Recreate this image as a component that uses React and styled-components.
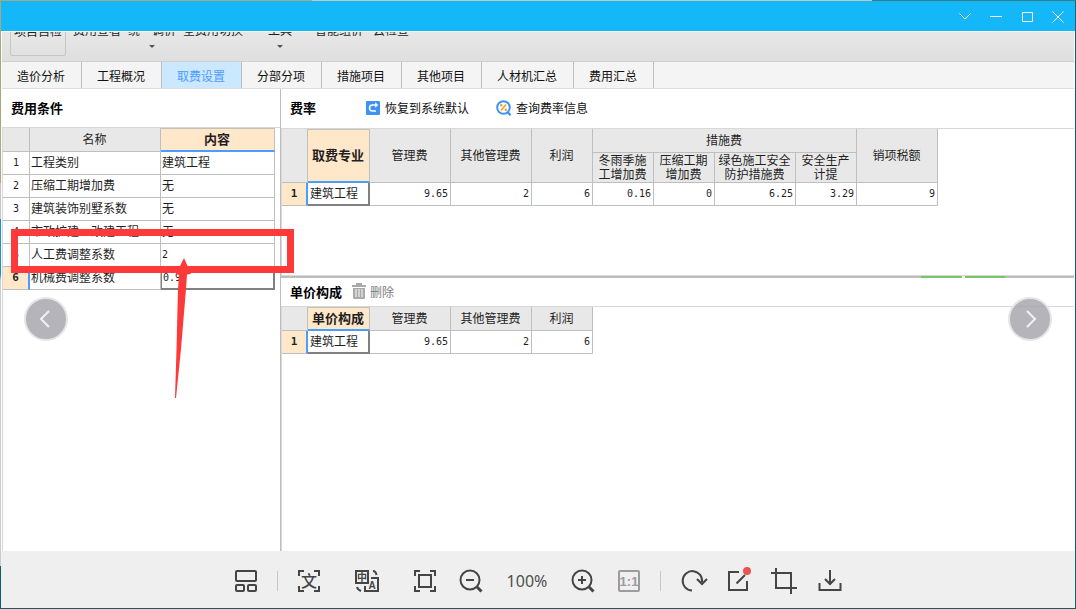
import React, { useState } from 'react';
import styled, { createGlobalStyle } from 'styled-components';

const GlobalStyle = createGlobalStyle`
  * {
    box-sizing: border-box;
  }

  body {
    margin: 0;
    font-family: "Liberation Sans", "Noto Sans CJK SC", sans-serif;
    font-size: 12px;
    color: #1f1f1f;
  }

  button {
    font: inherit;
    color: inherit;
    border: 0;
    padding: 0;
    background: none;
    cursor: pointer;
  }
`;

/* thin strip of desktop showing around the window */
const Desktop = styled.div`
  height: 100vh;
  padding: 1px;
  background:
    linear-gradient(90deg, #a9a87c 0, #a9a87c 29%, #c4c4c4 29%, #c4c4c4 81%, #3c7f83 81%) top / 100% 1px no-repeat,
    linear-gradient(#a9a87c 0, #a9a87c 30%, #c4c4c4 30%, #c4c4c4 36%, #1292cf 36%, #1292cf 45%, #c9ccd2 46%, #c9ccd2 93%, #0f5f66 93%) left / 1px 100% no-repeat,
    #0f5f66;
`;

const Window = styled.div`
  position: relative;
  display: flex;
  flex-direction: column;
  height: 100%;
  background: #ffffff;
  overflow: hidden;
`;

const TitleBar = styled.header`
  display: flex;
  flex: none;
  justify-content: flex-end;
  align-items: center;
  gap: 17px;
  height: 30px;
  padding-right: 10px;
  background: #14b8f8;
`;

const WindowButton = styled.button`
  display: flex;
  width: 14px;
  height: 14px;

  svg {
    width: 14px;
    height: 14px;
    fill: none;
    stroke: #ffffff;
  }
`;

const Screen = styled.main`
  display: flex;
  flex: 1;
  flex-direction: column;
  min-height: 0;
  padding: 1px 1px 0;
`;

const Ribbon = styled.div`
  display: flex;
  flex: none;
  gap: 7px;
  height: 30px;
  padding-left: 8px;
  border-bottom: 1px solid #cfcfcf;
  background: linear-gradient(#e7e7e7, #dfdfdf);
  overflow: hidden;
`;

const RibbonButton = styled.button`
  display: flex;
  flex: none;
  flex-direction: column;
  align-items: center;
  height: 34px;
  margin-top: -10px;
  margin-left: ${(props) => props.$lead || 0}px;
  padding: ${(props) => (props.$framed ? '0 3px' : '0')};
  border: ${(props) => (props.$framed ? '1px solid #c6c6c6' : '0')};
  border-radius: 2px;
  line-height: 18px;
  white-space: nowrap;
`;

const Caret = styled.span`
  margin-top: 5px;
  border: 3px solid transparent;
  border-top-color: #555555;
  border-bottom: 0;
`;

const Tabs = styled.nav`
  display: flex;
  flex: none;
  height: 27px;
  border-bottom: 1px solid #dedede;
  background: #f4f4f4;
`;

const Tab = styled.button`
  padding: 0 16px 0 15px;
  border-right: 1px solid #bfbfbf;
  background: ${(props) => (props.$active ? '#cce8ff' : 'transparent')};
  color: ${(props) => (props.$active ? '#4a9cff' : '#111111')};
`;

const Columns = styled.div`
  display: grid;
  flex: 1;
  grid-template-columns: 278px 1fr;
  min-height: 0;
`;

const Pane = styled.section`
  display: flex;
  flex-direction: column;
  min-width: 0;
  border-left: ${(props) => (props.$divided ? '1px solid #bdbdbd' : '0')};
`;

const paneHeaderHeights = { slim: 28, normal: 38, tall: 39 };

const PaneHeader = styled.div`
  display: flex;
  flex: none;
  align-items: center;
  height: ${(props) => paneHeaderHeights[props.$size || 'normal']}px;
  padding: 0 0 2px 9px;
`;

const PaneTitle = styled.h2`
  margin: 0;
  color: #000000;
  font-size: 13px;
  font-weight: bold;
`;

const LinkButton = styled.button`
  display: flex;
  align-items: center;
  gap: 4px;
  margin-left: ${(props) => props.$space}px;
  color: ${(props) => (props.disabled ? '#7d7d7d' : '#111111')};
`;

const GridArea = styled.div`
  flex: ${(props) => (props.$fixed ? '0 0 147px' : '1')};
  border-top: 1px solid #d8d8d8;
  border-left: 1px solid #d8d8d8;
  overflow: hidden;
`;

const Splitter = styled.div`
  display: flex;
  flex: none;
  justify-content: flex-end;
  height: 3px;
  padding-right: 69px;
  border-top: 1px solid #d8d8d8;
  background: #bdbdbd;
`;

const SplitterGrip = styled.span`
  width: 84px;
  background: linear-gradient(90deg, #79c565 49%, #ffffff 49%, #ffffff 52%, #79c565 52%);
`;

const Table = styled.table`
  table-layout: fixed;
  width: ${(props) => props.$width}px;
  border-collapse: separate;
  border-spacing: 0;
`;

const HeadCell = styled.th`
  height: ${(props) => props.$height || 24}px;
  padding: 0 1px 0 0;
  border-right: 1px solid #bfbfbf;
  border-bottom: 1px solid #bfbfbf;
  background: #e8e8e8;
  font-weight: normal;
  line-height: 14px;
`;

const ActiveHeadCell = styled(HeadCell)`
  border-top: 1px solid #c4bfb8;
  border-bottom: 2px solid #4a9cff;
  background: #ffe7ca;
  font-size: 13px;
  font-weight: bold;
`;

const IndexCell = styled.th`
  height: 23px;
  padding: 0;
  border-right: ${(props) => (props.$active ? '2px solid #4a9cff' : '1px solid #bfbfbf')};
  border-bottom: 1px solid #bfbfbf;
  background: ${(props) => (props.$active ? '#ffe7ca' : '#ffffff')};
  font-family: "DejaVu Sans Mono", monospace;
  font-size: ${(props) => (props.$active ? 11 : 10)}px;
  font-weight: ${(props) => (props.$active ? 'bold' : 'normal')};
  line-height: 16px;
`;

const Cell = styled.td`
  height: 23px;
  padding: 0 2px 0 1px;
  border-right: 1px solid #bfbfbf;
  border-bottom: 1px solid #bfbfbf;
  line-height: 16px;
  white-space: nowrap;
`;

const NumberCell = styled(Cell)`
  font-family: "DejaVu Sans Mono", monospace;
  font-size: 10px;
  text-align: right;
`;

const ValueCell = styled(Cell)`
  font-family: ${(props) => (props.$numeric ? '"DejaVu Sans Mono", monospace' : 'inherit')};
  font-size: ${(props) => (props.$numeric ? 10 : 12)}px;
`;

const FocusCell = styled(ValueCell)`
  padding-left: 2px;
  border-right: 2px solid #808080;
  border-bottom: 2px solid #808080;
  box-shadow: ${(props) => (props.$boxed ? 'inset 1px 0 #808080' : 'none')};
`;

const BottomBar = styled.footer`
  display: flex;
  flex: none;
  justify-content: center;
  align-items: center;
  gap: 19px;
  height: 57px;
  padding-top: 3px;
  background: #efefef;
`;

const ToolGroup = styled.div`
  display: flex;
  align-items: center;
  gap: ${(props) => props.$gap || 22}px;
`;

const ToolButton = styled.button`
  display: flex;
  color: ${(props) => (props.disabled ? '#9c9c9c' : '#454545')};

  svg {
    width: 26px;
    height: 26px;
    margin: -1px;
    fill: none;
    stroke: currentColor;
    stroke-width: 2;
    overflow: visible;
  }

  text {
    fill: currentColor;
    stroke: none;
    font-family: "Liberation Sans", "Noto Sans CJK SC", sans-serif;
    font-weight: bold;
    text-anchor: middle;
  }
`;

const Separator = styled.span`
  width: 1px;
  height: 20px;
  background: #c6c6d2;
`;

const ZoomLevel = styled.output`
  min-width: 44px;
  color: #505050;
  font-family: "Noto Sans", sans-serif;
  font-size: 16px;
  line-height: 24px;
  text-align: center;
`;

const PageButton = styled.button`
  position: absolute;
  top: 296px;
  ${(props) => (props.$side === 'left' ? 'left: 23px;' : 'right: 23px;')}
  width: 44px;
  height: 44px;
  border: 2px solid #e5e5e8;
  border-radius: 50%;
  background: rgba(163, 164, 171, 0.82);

  svg {
    display: block;
    margin: auto;
    fill: none;
    stroke: #f2f2f4;
    stroke-width: 2;
  }
`;

/* marks drawn by hand on top of the sheet */
const Highlight = styled.div`
  position: absolute;
  top: 228px;
  left: 10px;
  width: 283px;
  height: 44px;
  border: 7px solid #fd3939;
  pointer-events: none;
`;

const Arrow = styled.svg`
  position: absolute;
  top: 256px;
  left: 172px;
  width: 20px;
  height: 142px;
  fill: #fd3939;
  pointer-events: none;
`;

const ribbonItems = [
  { label: '项目自检', framed: true },
  { label: '费用查看' },
  { label: '统一调价', caret: true },
  { label: '全费用切换' },
  { label: '工具', caret: true, lead: 18 },
  { label: '智能组价', lead: 16 },
  { label: '云检查', lead: 3 },
];

const tabs = ['造价分析', '工程概况', '取费设置', '分部分项', '措施项目', '其他项目', '人材机汇总', '费用汇总'];

const conditions = [
  { name: '工程类别', value: '建筑工程' },
  { name: '压缩工期增加费', value: '无' },
  { name: '建筑装饰别墅系数', value: '无' },
  { name: '市政扩建、改建工程', value: '无' },
  { name: '人工费调整系数', value: '2' },
  { name: '机械费调整系数', value: '0.9' },
];

const rateWidths = [26, 62, 81, 81, 61, 61, 61, 81, 61, 81];
const rates = ['9.65', '2', '6', '0.16', '0', '6.25', '3.29', '9'];

const Widths = ({ list }) => (
  <colgroup>
    {list.map((width, i) => <col key={i} style={{ width }} />)}
  </colgroup>
);

const ConditionTable = () => (
  <Table $width={272}>
    <Widths list={[27, 131, 114]} />
    <thead>
      <tr>
        <HeadCell />
        <HeadCell>名称</HeadCell>
        <ActiveHeadCell>内容</ActiveHeadCell>
      </tr>
    </thead>
    <tbody>
      {conditions.map((row, i) => {
        const last = i === conditions.length - 1;
        const Value = last ? FocusCell : ValueCell;
        return (
          <tr key={row.name}>
            <IndexCell $active={last}>{i + 1}</IndexCell>
            <Cell>{row.name}</Cell>
            <Value $boxed={last} $numeric={/\d/.test(row.value)}>{row.value}</Value>
          </tr>
        );
      })}
    </tbody>
  </Table>
);

const RateTable = () => (
  <Table $width={656}>
    <Widths list={rateWidths} />
    <thead>
      <tr>
        <HeadCell rowSpan={2} />
        <ActiveHeadCell rowSpan={2}>取费专业</ActiveHeadCell>
        <HeadCell rowSpan={2}>管理费</HeadCell>
        <HeadCell rowSpan={2}>其他管理费</HeadCell>
        <HeadCell rowSpan={2}>利润</HeadCell>
        <HeadCell colSpan={4}>措施费</HeadCell>
        <HeadCell rowSpan={2}>销项税额</HeadCell>
      </tr>
      <tr>
        <HeadCell $height={30}>冬雨季施<br />工增加费</HeadCell>
        <HeadCell $height={30}>压缩工期<br />增加费</HeadCell>
        <HeadCell $height={30}>绿色施工安全<br />防护措施费</HeadCell>
        <HeadCell $height={30}>安全生产<br />计提</HeadCell>
      </tr>
    </thead>
    <tbody>
      <tr>
        <IndexCell $active>1</IndexCell>
        <FocusCell>建筑工程</FocusCell>
        {rates.map((rate, i) => <NumberCell key={i}>{rate}</NumberCell>)}
      </tr>
    </tbody>
  </Table>
);

const PriceTable = () => (
  <Table $width={311}>
    <Widths list={rateWidths.slice(0, 5)} />
    <thead>
      <tr>
        <HeadCell />
        <ActiveHeadCell>单价构成</ActiveHeadCell>
        <HeadCell>管理费</HeadCell>
        <HeadCell>其他管理费</HeadCell>
        <HeadCell>利润</HeadCell>
      </tr>
    </thead>
    <tbody>
      <tr>
        <IndexCell $active>1</IndexCell>
        <FocusCell>建筑工程</FocusCell>
        {rates.slice(0, 3).map((rate, i) => <NumberCell key={i}>{rate}</NumberCell>)}
      </tr>
    </tbody>
  </Table>
);

const RestoreIcon = () => (
  <svg width="15" height="15" viewBox="0 0 15 15" fill="none">
    <rect width="14" height="14" y="1" rx="1" fill="#3f92f5" />
    <path d="M11 5H6.5C4.5 5 3.5 6.3 3.5 8s1 3 3 3H10" stroke="#fff" strokeWidth="1.5" />
    <path d="M9.2 2.2 12.2 5 9.2 7.8z" fill="#fff" />
  </svg>
);

const RateSearchIcon = () => (
  <svg width="16" height="16" viewBox="0 0 16 16" fill="none">
    <circle cx="7.5" cy="7.5" r="6.3" stroke="#3f92f5" strokeWidth="2" />
    <path d="m11.5 12 3 3.2" stroke="#3f92f5" strokeWidth="2.4" />
    <path d="m10 4.5-5 6" stroke="#f79a1c" strokeWidth="1.5" />
    <circle cx="5.2" cy="5.3" r="1.2" fill="#f79a1c" />
    <circle cx="9.8" cy="9.7" r="1.2" fill="#f79a1c" />
  </svg>
);

const TrashIcon = () => (
  <svg width="14" height="16" viewBox="0 0 14 16" fill="#a9a9a9">
    <path d="M0 2h4V0h6v2h4v2H0z" />
    <path fillRule="evenodd" d="M1 5h12v9.5c0 .8-.5 1.5-1.5 1.5h-9C1.5 16 1 15.3 1 14.5zM3.5 6v8h1V6zm3 0v8h1V6zm3 0v8h1V6z" />
  </svg>
);

const Tool = ({ label, disabled, children }) => (
  <ToolButton aria-label={label} disabled={disabled}>
    <svg viewBox="0 0 26 26">{children}</svg>
  </ToolButton>
);

const corners = 'M3 8V3h5M18 3h5v5M23 18v5h-5M8 23H3v-5';

const App = () => {
  const [activeTab, setActiveTab] = useState('取费设置');

  return (
    <Desktop>
      <GlobalStyle />
      <Window>
        <TitleBar>
          <WindowButton aria-label="menu"><svg><path d="m1.5 4.5 5.500 5.500 5.500-5.500" /></svg></WindowButton>
          <WindowButton aria-label="minimize"><svg><path d="M1 7.5h12" /></svg></WindowButton>
          <WindowButton aria-label="maximize"><svg><path d="M2.5 3.5h10v9h-10z" /></svg></WindowButton>
          <WindowButton aria-label="close"><svg><path d="m1.5 2.5 11 11M12.5 2.5l-11 11" /></svg></WindowButton>
        </TitleBar>

        <Screen>
          <Ribbon>
            {ribbonItems.map((item) => (
              <RibbonButton key={item.label} $framed={item.framed} $lead={item.lead}>
                {item.label}
                {item.caret && <Caret />}
              </RibbonButton>
            ))}
          </Ribbon>
          <Tabs>
            {tabs.map((tab) => (
              <Tab key={tab} $active={tab === activeTab} onClick={() => setActiveTab(tab)}>{tab}</Tab>
            ))}
          </Tabs>
          <Columns>
            <Pane>
              <PaneHeader>
                <PaneTitle>费用条件</PaneTitle>
              </PaneHeader>
              <GridArea>
                <ConditionTable />
              </GridArea>
            </Pane>
            <Pane $divided>
              <PaneHeader $size="tall">
                <PaneTitle>费率</PaneTitle>
                <LinkButton $space={50}><RestoreIcon />恢复到系统默认</LinkButton>
                <LinkButton $space={27}><RateSearchIcon />查询费率信息</LinkButton>
              </PaneHeader>
              <GridArea $fixed>
                <RateTable />
              </GridArea>
              <Splitter><SplitterGrip /></Splitter>
              <PaneHeader $size="slim">
                <PaneTitle>单价构成</PaneTitle>
                <LinkButton $space={10} disabled><TrashIcon />删除</LinkButton>
              </PaneHeader>
              <GridArea>
                <PriceTable />
              </GridArea>
            </Pane>
          </Columns>
        </Screen>

        <Highlight />
        <Arrow viewBox="0 0 20 142">
          <path d="M11 1 18 17l-4 .5L13 32 8 92 3 141h-1L3.5 92 5 32l1-14-3-1z" />
        </Arrow>
        <PageButton $side="left" aria-label="previous">
          <svg width="20" height="20"><path d="m13 2-8 8 8 8" /></svg>
        </PageButton>
        <PageButton $side="right" aria-label="next">
          <svg width="20" height="20"><path d="m7 2 8 8-8 8" /></svg>
        </PageButton>

        <BottomBar>
          <Tool label="layout">
            <rect x="3" y="3" width="20" height="10" rx="1" />
            <rect x="3" y="17" width="8" height="6" rx="1" />
            <rect x="15" y="17" width="8" height="6" rx="1" />
          </Tool>
          <Separator />
          <ToolGroup>
            <ToolGroup $gap={34}>
              <Tool label="recognize text">
                <path d={corners} />
                <text x="13" y="19" fontSize="16" style={{ fontWeight: 500 }}>文</text>
              </Tool>
              <Tool label="translate">
                <path d="M2 3h12v12H2zM17 10h7v13H11v-5" />
                <path d="M19 3c2 0 3 1 3.5 4M3 19c.5 2 1.5 3 4 4" />
                <text x="8" y="13" fontSize="10">中</text>
                <text x="18" y="21" fontSize="10">A</text>
              </Tool>
              <Tool label="fit to window">
                <path d={corners} />
                <rect x="7" y="7" width="12" height="12" />
              </Tool>
            </ToolGroup>
            <Tool label="zoom out">
              <circle cx="12" cy="12" r="9.5" />
              <path d="M8 12h8" />
              <path d="m18.5 18.5 5 5" strokeWidth="3" />
            </Tool>
            <ZoomLevel>100%</ZoomLevel>
            <Tool label="zoom in">
              <circle cx="12" cy="12" r="9.5" />
              <path d="M8 12h8M12 8v8" />
              <path d="m18.5 18.5 5 5" strokeWidth="3" />
            </Tool>
            <Tool label="actual size" disabled>
              <rect x="3" y="3" width="20" height="20" rx="1" />
              <text x="13" y="18" fontSize="13">1:1</text>
            </Tool>
          </ToolGroup>
          <Separator />
          <ToolGroup>
            <Tool label="rotate">
              <path d="M13 22.5A9.7 9.7 0 1 1 23 14" />
              <path d="m18 11 5 5 5-5" />
            </Tool>
            <Tool label="edit">
              <path d="M14 4H4v18h18V13M11.5 15.5 20 7" />
              <circle cx="22" cy="3" r="4" fill="#e95350" stroke="none" />
            </Tool>
            <Tool label="crop">
              <path d="M0 5h20v21M5 0v20h21" />
            </Tool>
            <Tool label="save">
              <path d="M13 2v14M8 11l5 5 5-5M2.5 15v7h21v-7" />
            </Tool>
          </ToolGroup>
        </BottomBar>
      </Window>
    </Desktop>
  );
};

export default App;
